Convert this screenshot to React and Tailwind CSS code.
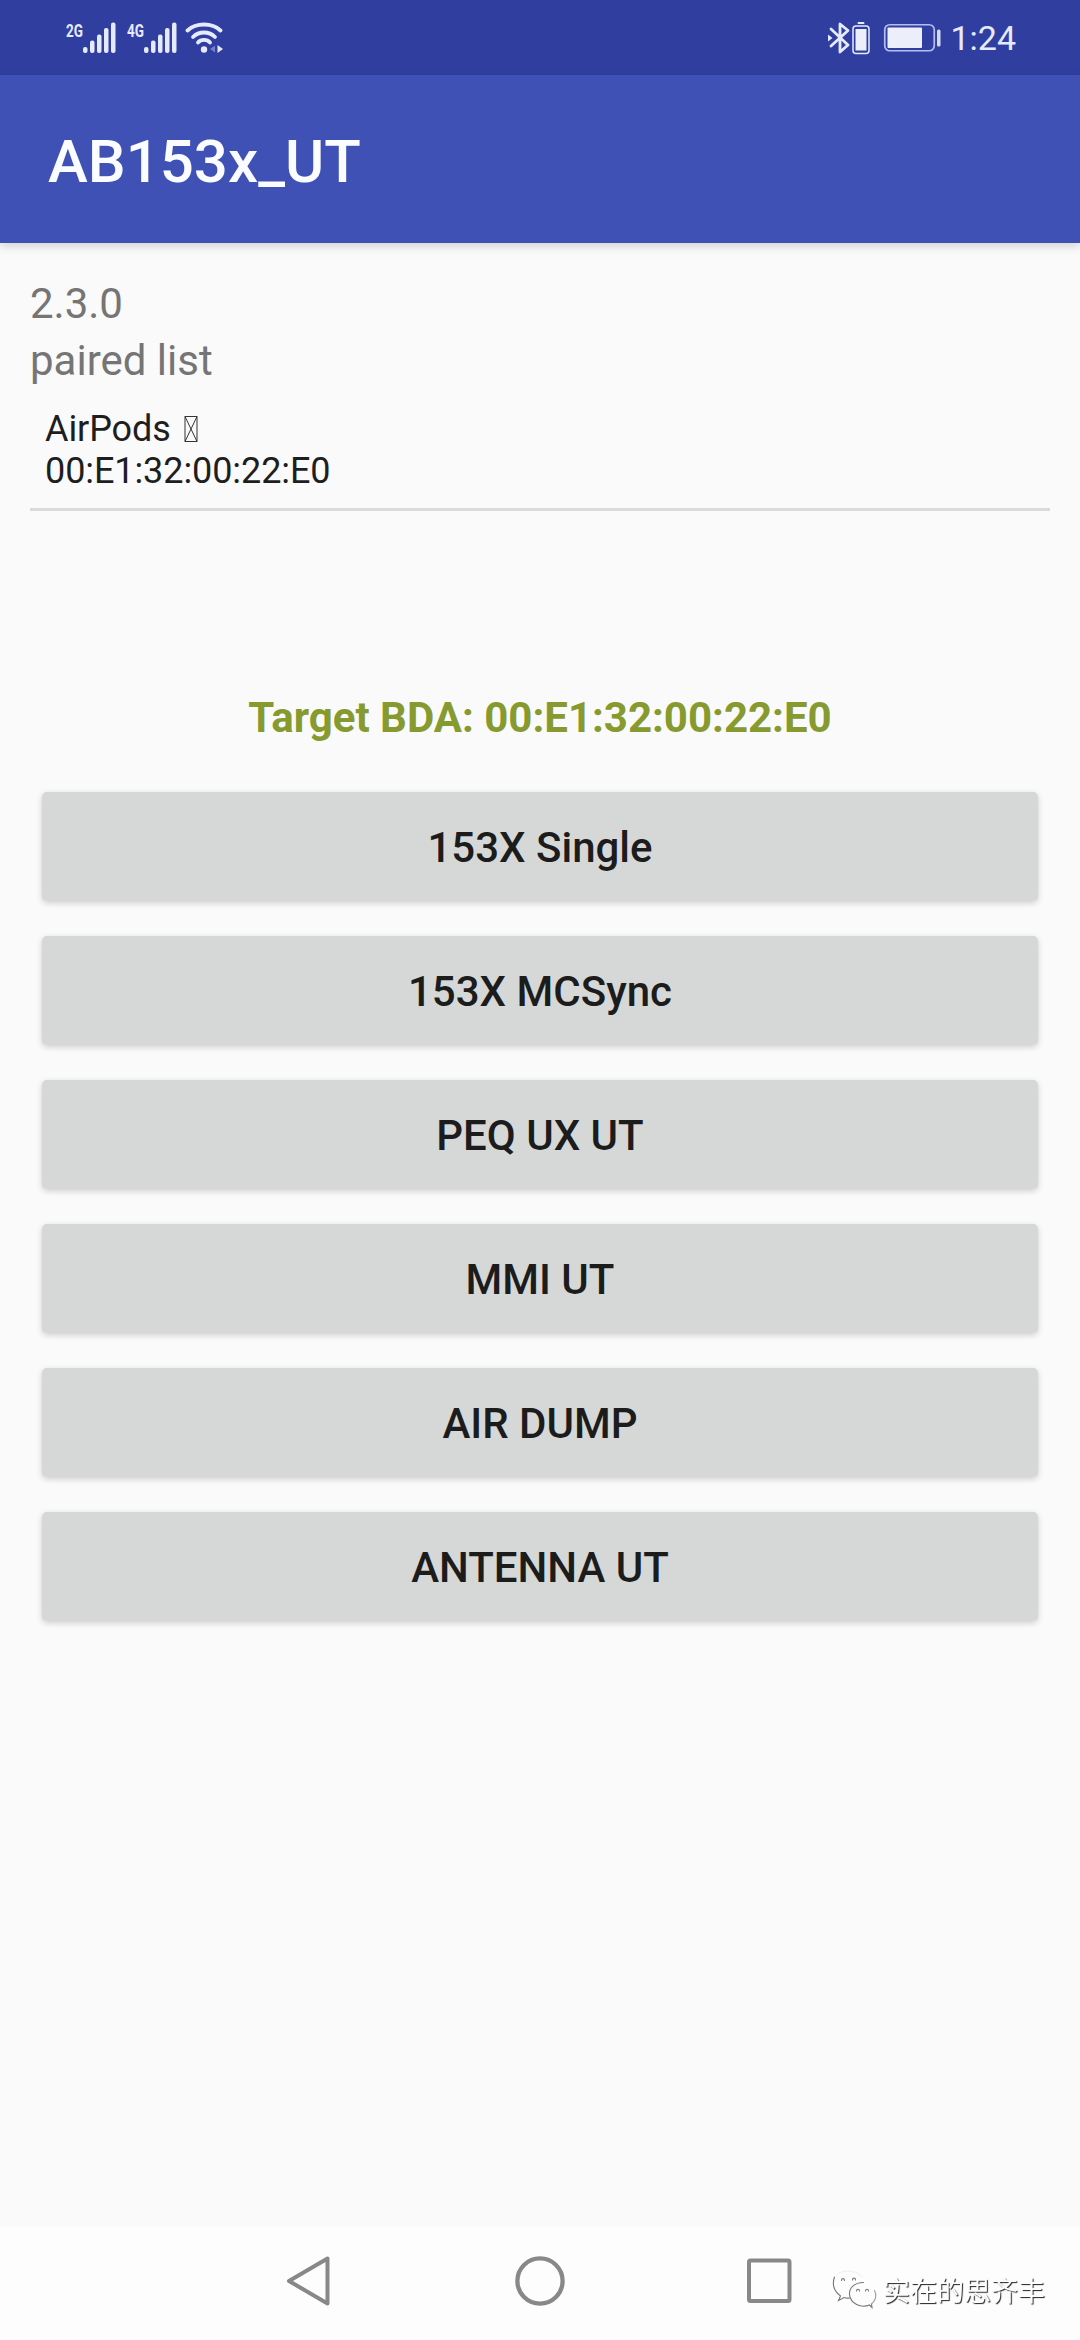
import React from 'react';

const actions = ['153X Single', '153X MCSync', 'PEQ UX UT', 'MMI UT', 'AIR DUMP', 'ANTENNA UT'];

const SignalIcon = ({ label }) => (
  <svg className="h-[34px] w-[52px] overflow-visible" viewBox="0 0 52 34" fill="#e6eaff">
    <text x="0" y="15.5" fontFamily="Roboto" fontSize="18.5" fontWeight="700" textLength="17" lengthAdjust="spacingAndGlyphs">{label}</text>
    <rect x="17" y="26" width="4.5" height="6" rx="2" />
    <rect x="24" y="19.5" width="4.5" height="12.5" rx="2" />
    <rect x="31" y="13.5" width="4.5" height="18.5" rx="2" />
    <rect x="38" y="7" width="4.5" height="25" rx="2" />
    <rect x="45" y="1.5" width="4.5" height="30.5" rx="2" />
  </svg>
);

const WifiIcon = () => (
  <svg className="h-[34px] w-[40px]" viewBox="0 0 40 34" fill="none" stroke="#e6eaff" strokeWidth="3.8" strokeLinecap="round">
    <path d="M2.5 9.5C11 1.5 27 1.5 35.5 9.5" />
    <path d="M8 16C14 10 24 10 30 16" />
    <path d="M13 21.5C16 18 22 18 25 21.5" />
    <circle cx="19" cy="28.5" r="3.2" fill="#e6eaff" stroke="none" />
    <path d="M30 24.5v7l-5-3.5z" fill="#7480ca" stroke="none" />
    <path d="M32.5 24l5.5 4-5.5 4z" fill="#e6eaff" stroke="none" />
  </svg>
);

const BluetoothIcon = () => (
  <svg className="h-[34px] w-[44px]" viewBox="0 0 44 34" fill="none" stroke="#e6eaff">
    <path d="M4 8l17 16-8 7V3l8 6.5L4 25" strokeWidth="2.8" strokeLinejoin="round" strokeLinecap="round" />
    <path d="M1 13.5l4.5 3.5L1 20.5z" fill="#e6eaff" stroke="none" />
    <rect x="26" y="5" width="16" height="27.5" rx="3" strokeWidth="1.5" />
    <rect x="28.5" y="8" width="11" height="21.5" fill="#eceefa" stroke="none" />
    <rect x="30.5" y="1" width="7" height="2" rx="1" fill="#e6eaff" stroke="none" />
  </svg>
);

const BatteryIcon = () => (
  <svg className="h-[30px] w-[60px]" viewBox="0 0 60 30" fill="none">
    <rect x="1.75" y="1.75" width="49.5" height="26" rx="5" stroke="#b4bdf2" strokeWidth="1.7" />
    <rect x="4.5" y="4.5" width="34.5" height="20.5" rx="1" fill="#eceefa" />
    <rect x="54" y="6.5" width="3.5" height="17" rx="1.5" fill="#d5dafa" />
  </svg>
);

const StatusBar = () => (
  <div className="flex h-[75px] items-center justify-between bg-[#303f9f] pl-[66px] pr-[64px]">
    <div className="flex items-center">
      <SignalIcon label="2G" />
      <div className="ml-[9px]">
        <SignalIcon label="4G" />
      </div>
      <div className="ml-[6px]">
        <WifiIcon />
      </div>
    </div>
    <div className="flex items-center">
      <BluetoothIcon />
      <div className="ml-[12px]">
        <BatteryIcon />
      </div>
      <span className="ml-[7px] text-[34px] leading-none text-[#e6eaff]">1:24</span>
    </div>
  </div>
);

const Header = () => (
  <header className="flex h-[168px] items-center bg-[#3f51b5] pl-[48px] pt-[5px] shadow-[0_3px_9px_rgba(0,0,0,0.16)]">
    <h1 className="text-[60px] font-medium leading-none text-[#fafcff]">AB153x_UT</h1>
  </header>
);

const PairedDevice = ({ name, address }) => (
  <div className="mt-[19px] border-b-[3px] border-[#dadada] pb-[16px] pl-[15px] text-[36px] leading-[42px] tracking-[-0.08px] text-[#1e1e1e]">
    <div className="flex items-center">
      <span>{name}</span>
      <svg className="ml-[13px] h-[27px] w-[14px]" viewBox="0 0 14 27" fill="none" stroke="#333" strokeWidth="1">
        <path d="M1 .5h12v25H1zM1 .5l12 25M13 .5L1 25.5" />
      </svg>
    </div>
    <div>{address}</div>
  </div>
);

const WeChatIcon = () => (
  <svg className="h-[40px] w-[46px]" viewBox="0 0 46 40" fill="none" stroke="#777" strokeWidth="1.1" strokeLinecap="round">
    <path d="M5 6C9 1 24 0 30 8" stroke="#d8d8d8" strokeWidth="0.7" strokeDasharray="1 2" />
    <path d="M2.5 8C0 15 2 22 8.5 27l-2 4.5 5.5-3c2 .7 4 .8 5.5.5" />
    <path d="M9.5 11.5c0-2.5 3-2.5 3 0M20.5 11c0-2.5 3-2.5 3 0" />
    <path d="M31.5 13.5C23 13.5 17 18.5 17.5 25.5c.8 9 11.5 14 20 10.5l2.5 2.5-.5-3.5" />
    <path d="M39.5 35c4.5-3.5 5.5-9 3-13.5" stroke="#999" />
    <path d="M24.5 22c0-2.3 3-2.3 3 0M33.5 22c0-2.3 3-2.3 3 0" />
  </svg>
);

const NavBar = () => (
  <nav className="flex h-[113px] items-start bg-[#fdfdfd] pl-[284px]">
    <svg className="mt-[28px] h-[54px] w-[48px]" viewBox="0 0 48 54" fill="none" stroke="#888" strokeWidth="4" strokeLinejoin="round">
      <path d="M43.5 3.5v45L5 26z" />
    </svg>
    <svg className="ml-[183px] mt-[28px] h-[54px] w-[50px]" viewBox="0 0 50 54" fill="none" stroke="#888" strokeWidth="4.3">
      <circle cx="25" cy="26" r="22.6" />
    </svg>
    <svg className="ml-[180px] mt-[28px] h-[54px] w-[50px]" viewBox="0 0 50 54" fill="none" stroke="#888" strokeWidth="4">
      <rect x="4" y="5.5" width="40.5" height="40.5" rx="1.5" />
    </svg>
    <div className="ml-[37px] mt-[42px] flex items-start">
      <WeChatIcon />
      <span className="ml-[5px] mt-[3px] whitespace-nowrap font-['Noto_Sans_CJK_SC',sans-serif] text-[27px] leading-[36px] text-[#fdfdfd] will-change-transform [text-shadow:1px_1px_1px_#222]">
        实在的思齐丰
      </span>
    </div>
  </nav>
);

const App = () => {
  return (
    <div className="flex h-[2340px] w-[1080px] flex-col overflow-hidden bg-[#fafafa] font-[Roboto,sans-serif]">
      <StatusBar />
      <Header />
      <main className="flex-1 px-[30px] pt-[32px]">
        <div className="text-[42px] leading-[57px] text-[#757575]">
          <p>2.3.0</p>
          <p>paired list</p>
        </div>
        <PairedDevice name="AirPods" address="00:E1:32:00:22:E0" />
        <p className="mt-[178px] text-center text-[42px] font-bold leading-[57px] text-[#869a30]">
          Target BDA: 00:E1:32:00:22:E0
        </p>
        <div className="mt-[46px] flex flex-col gap-[35px] px-[12px]">
          {actions.map((action) => (
            <button key={action} className="h-[109px] rounded-[5px] bg-[#d6d8d7] pt-[2px] text-[42px] font-medium leading-none text-[#1c1c1c] shadow-[0_2px_6px_rgba(0,0,0,0.18)]">
              {action}
            </button>
          ))}
        </div>
      </main>
      <NavBar />
    </div>
  );
};

export default App;
